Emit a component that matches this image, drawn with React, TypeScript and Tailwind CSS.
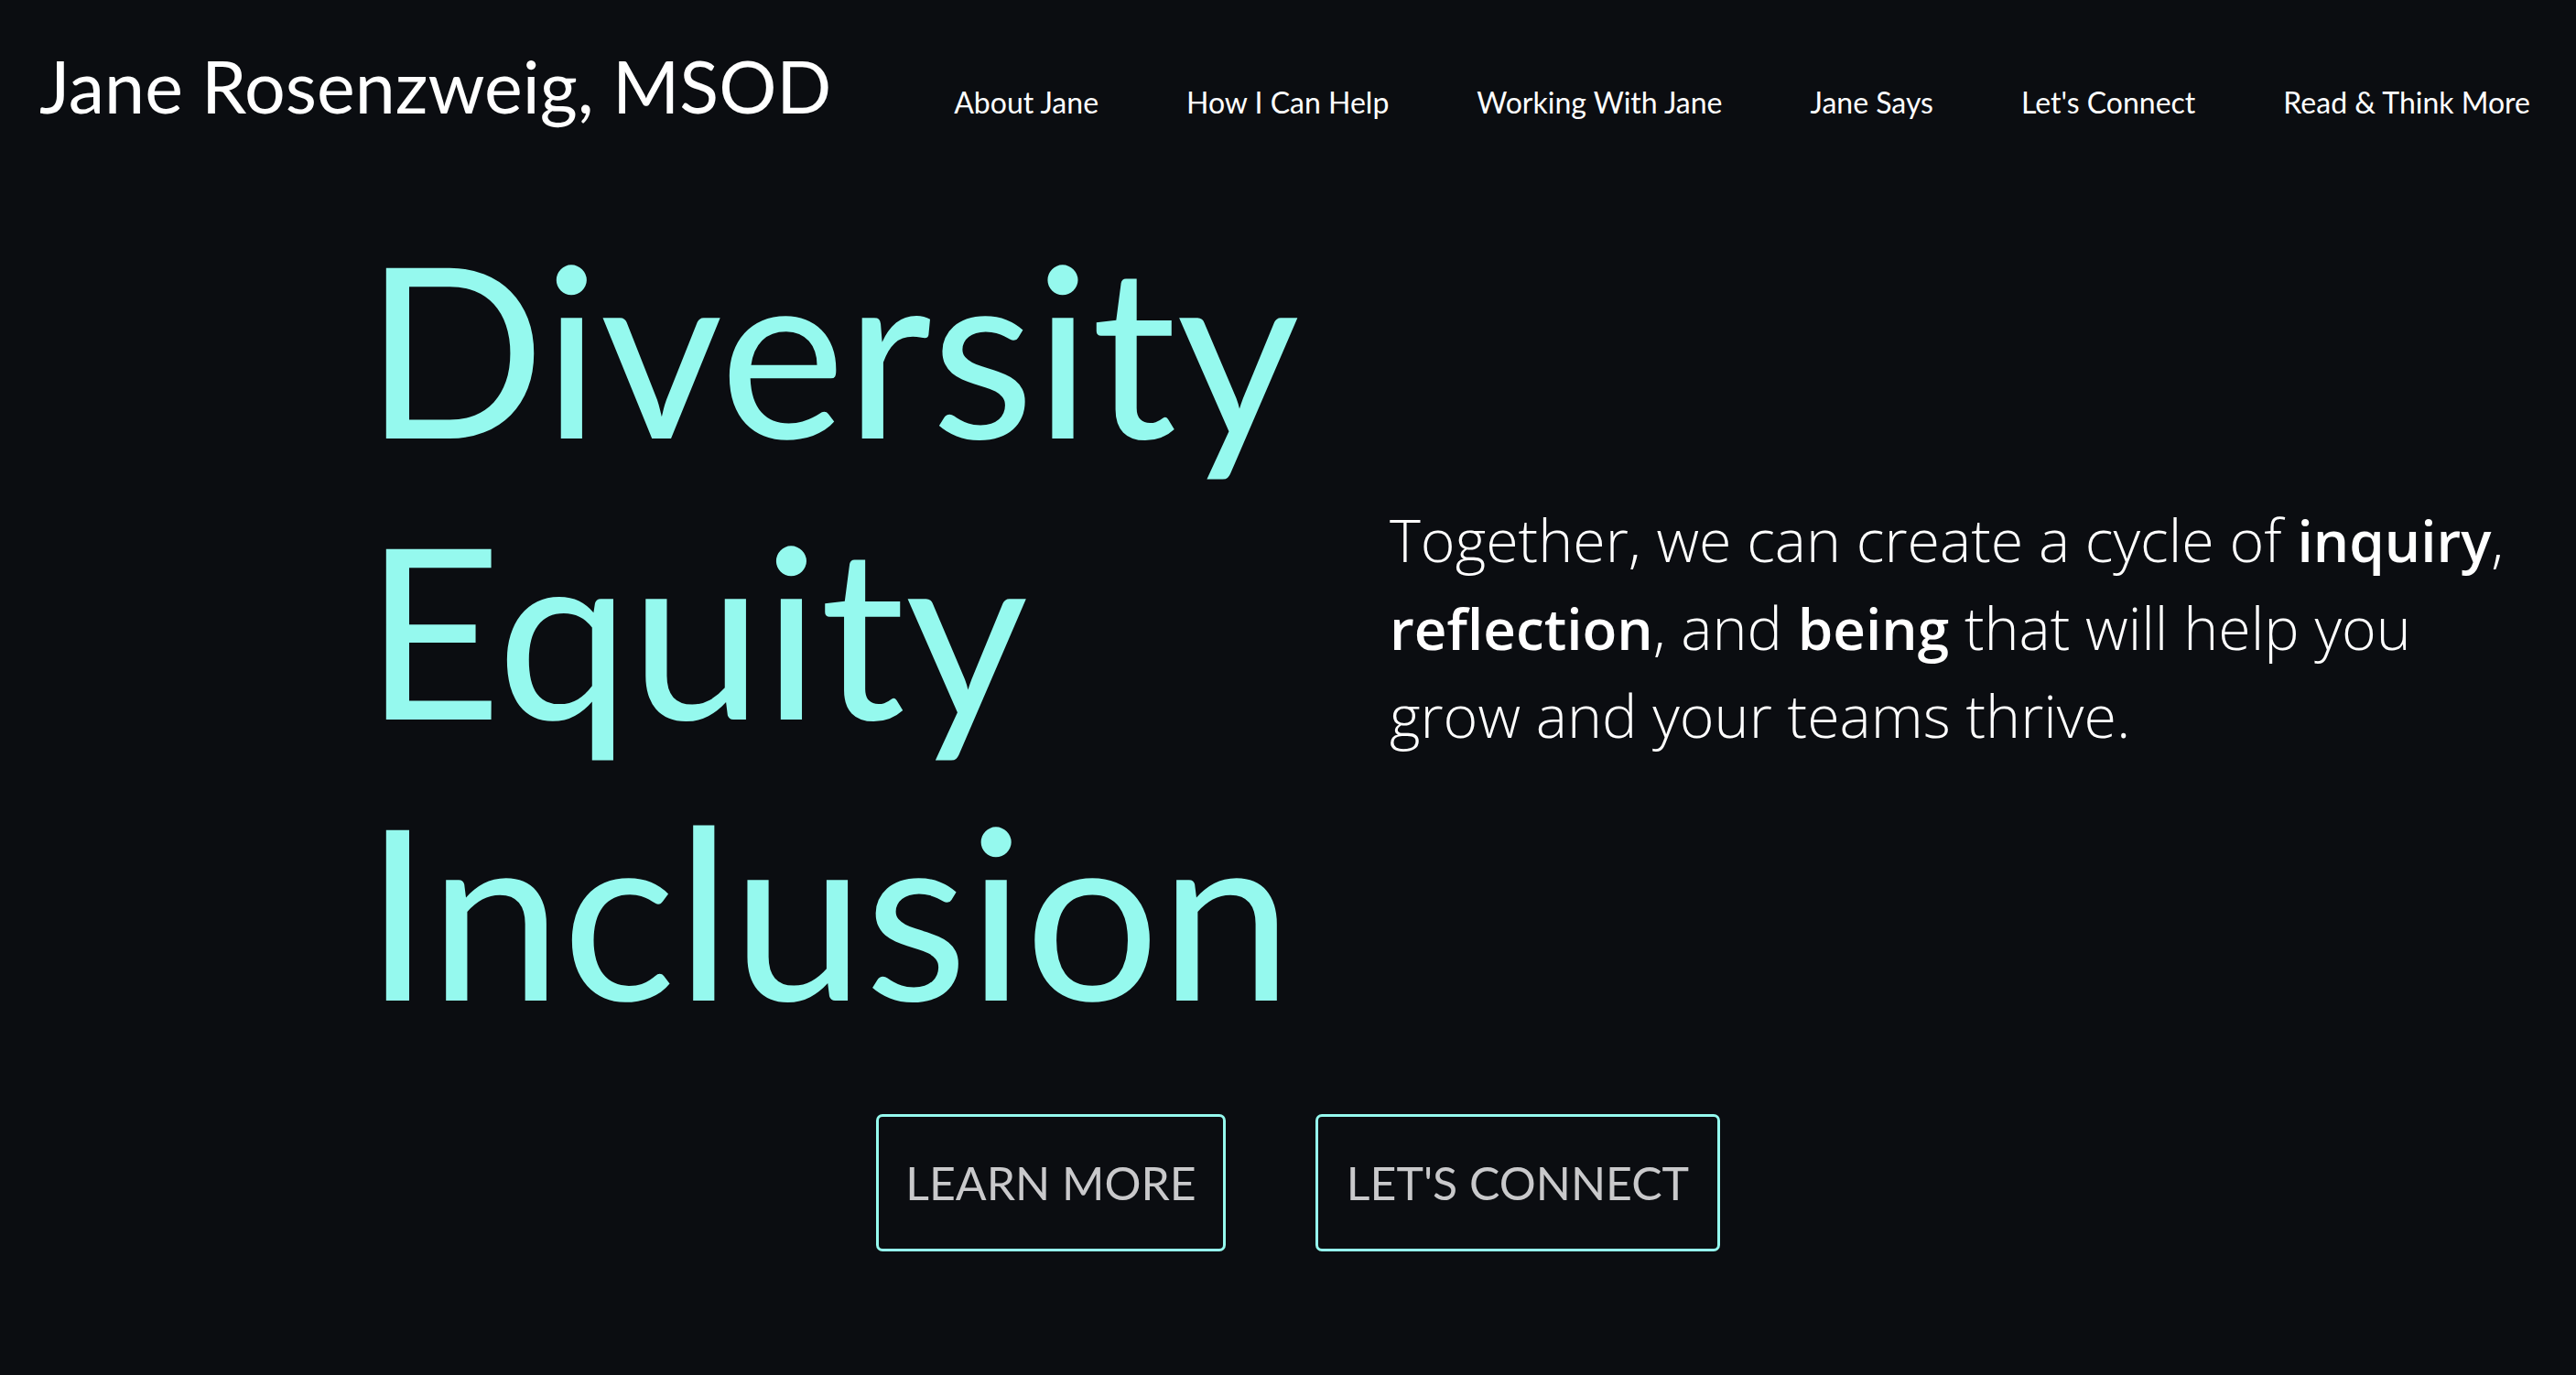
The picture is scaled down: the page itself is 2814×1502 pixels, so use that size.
import React from "react";

const navLinks = ["About Jane", "How I Can Help", "Working With Jane", "Jane Says", "Let's Connect", "Read & Think More"];

const words = ["Diversity", "Equity", "Inclusion"];

const App: React.FC = () => {
  return (
    <div className="min-h-[1502px] w-full bg-[#0b0d11] text-white">
      <header className="flex flex-row items-baseline justify-between pl-[43px] pr-[50px] pt-[44px]">
        <h1 className="font-['Lato',sans-serif] text-[79px] leading-[100px] font-normal text-white">Jane Rosenzweig, MSOD</h1>
        <nav className="flex flex-row items-baseline gap-[96px] font-['Lato',sans-serif] text-[32px] text-white">
          {navLinks.map((link) => (
            <a key={link} href="#" className="whitespace-nowrap">
              {link}
            </a>
          ))}
        </nav>
      </header>

      <main className="flex flex-row items-center pl-[398px] pr-[50px] pt-[81px]">
        <div className="flex flex-col w-[1120px] font-['Lato',sans-serif] text-[260px] leading-[307px] text-[#95f9ee]">
          {words.map((word) => (
            <span key={word}>{word}</span>
          ))}
        </div>
        <p className="w-[1240px] font-['Open_Sans',sans-serif] text-[64.5px] leading-[95px] font-light text-white">
          Together, we can create a cycle of <strong className="text-[62px] font-semibold">inquiry</strong>, <strong className="text-[62px] font-semibold">reflection</strong>, and <strong className="text-[62px] font-semibold">being</strong> that will help you grow and your teams thrive.
        </p>
      </main>

      <div className="flex flex-row justify-center gap-[98px] pl-[22px] pt-[71px]">
        <a href="#" className="flex items-center justify-center h-[150px] w-[382px] rounded-[7px] border-[3px] border-[#95f9ee] font-['Lato',sans-serif] text-[50px] uppercase text-[#c9c9cb]">
          Learn More
        </a>
        <a href="#" className="flex items-center justify-center h-[150px] w-[442px] rounded-[7px] border-[3px] border-[#95f9ee] font-['Lato',sans-serif] text-[50px] uppercase text-[#c9c9cb]">
          Let's Connect
        </a>
      </div>
    </div>
  );
};

export default App;
